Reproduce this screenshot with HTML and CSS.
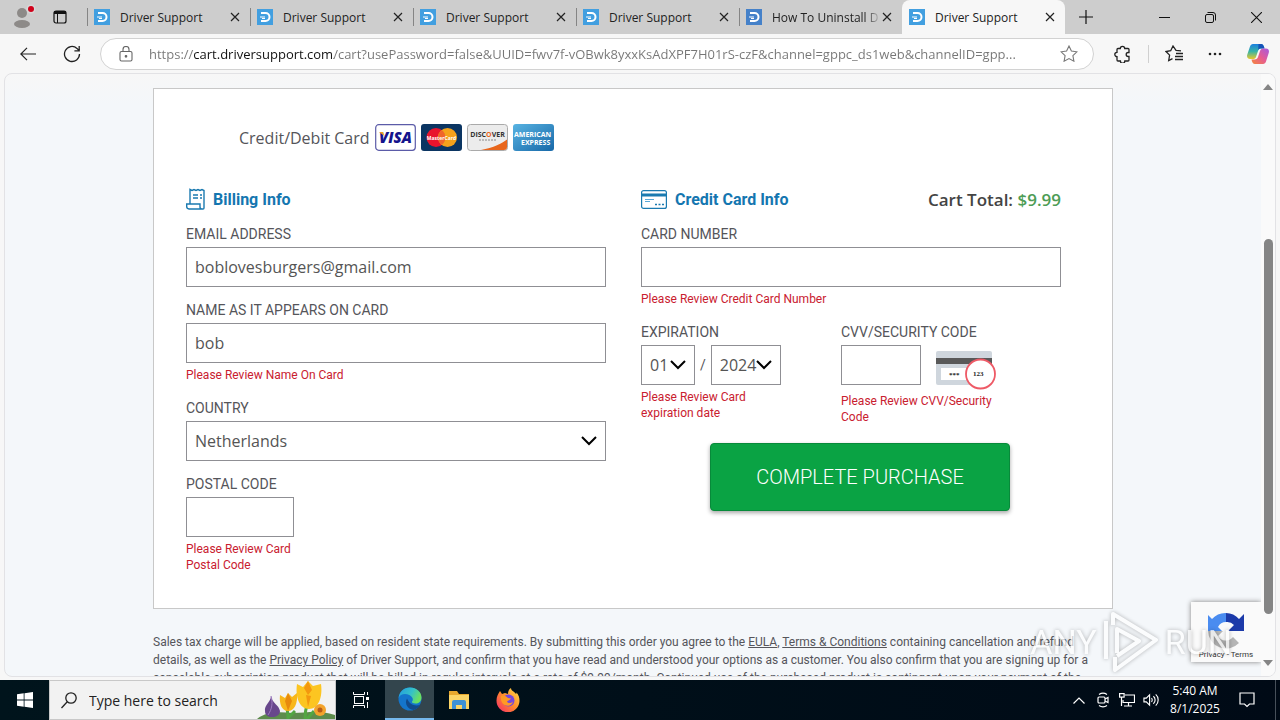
FILE: index.html
```
<!DOCTYPE html>
<html lang="en">
  <head>
    <meta charset="UTF-8" />
    <meta name="viewport" content="width=device-width, initial-scale=1.0" />
    <title>Driver Support</title>
    <link rel="stylesheet" href="styles.css">
  </head>
  <body>
    <!-- shared symbols -->
    <svg class="symbols" aria-hidden="true">
      <symbol id="favicon" viewBox="0 0 16 16">
        <rect width="16" height="16" fill="currentColor" />
        <path d="M4 4h4.500a4 4 0 0 1 0 8H4" fill="none" stroke="#fff" stroke-width="2" />
        <path d="M3 8h5M5 9.500h3" stroke="#fff" stroke-width="1" />
      </symbol>
      <symbol id="close" viewBox="0 0 10 10">
        <path d="M1 1l8 8M9 1L1 9" stroke="#222" stroke-width="1.200" />
      </symbol>
    </svg>

    <header class="tab-bar">
      <div class="tab-tools">
        <button class="icon-button" aria-label="Profile">
          <svg width="28" height="28" viewBox="0 0 28 28">
            <circle cx="12" cy="10" r="5" fill="#8d8a88" />
            <ellipse cx="12" cy="21" rx="8" ry="4" fill="#8d8a88" />
            <circle cx="21" cy="6" r="4.500" fill="#d8d8d8" />
            <circle cx="21" cy="6" r="3" fill="#d0021b" />
          </svg>
        </button>
        <button class="icon-button" aria-label="Tab actions">
          <svg width="14" height="14" viewBox="0 0 14 14" fill="none" stroke="#111">
            <rect x="1" y="1" width="12" height="12" rx="2" stroke-width="1.200" />
            <path d="M1 2.500h12" stroke-width="3" />
            <path d="M4.500 3v10" />
          </svg>
        </button>
      </div>
      <nav class="tabs">
        <div class="tab"><svg class="favicon"><use href="#favicon" /></svg><span class="tab-title">Driver Support</span><button class="tab-close" aria-label="Close tab"><svg width="10" height="10"><use href="#close" /></svg></button></div>
        <div class="tab"><svg class="favicon"><use href="#favicon" /></svg><span class="tab-title">Driver Support</span><button class="tab-close" aria-label="Close tab"><svg width="10" height="10"><use href="#close" /></svg></button></div>
        <div class="tab"><svg class="favicon"><use href="#favicon" /></svg><span class="tab-title">Driver Support</span><button class="tab-close" aria-label="Close tab"><svg width="10" height="10"><use href="#close" /></svg></button></div>
        <div class="tab"><svg class="favicon"><use href="#favicon" /></svg><span class="tab-title">Driver Support</span><button class="tab-close" aria-label="Close tab"><svg width="10" height="10"><use href="#close" /></svg></button></div>
        <div class="tab"><svg class="favicon dark"><use href="#favicon" /></svg><span class="tab-title fade">How To Uninstall D</span><button class="tab-close" aria-label="Close tab"><svg width="10" height="10"><use href="#close" /></svg></button></div>
        <div class="tab active"><svg class="favicon"><use href="#favicon" /></svg><span class="tab-title">Driver Support</span><button class="tab-close" aria-label="Close tab"><svg width="10" height="10"><use href="#close" /></svg></button></div>
      </nav>
      <button class="icon-button new-tab" aria-label="New tab">
        <svg width="14" height="14" viewBox="0 0 14 14"><path d="M7 0v14M0 7h14" stroke="#111" stroke-width="1.200" /></svg>
      </button>
      <div class="window-buttons">
        <button class="icon-button" aria-label="Minimize">
          <svg width="11" height="11" viewBox="0 0 11 11"><path d="M0 5.500h11" stroke="#111" /></svg>
        </button>
        <button class="icon-button" aria-label="Restore">
          <svg width="11" height="11" viewBox="0 0 11 11" fill="none" stroke="#111">
            <rect x=".5" y="2.500" width="8" height="8" rx="1.500" />
            <path d="M2.500 .5H8a2.500 2.500 0 0 1 2.500 2.500v5.500" />
          </svg>
        </button>
        <button class="icon-button" aria-label="Close">
          <svg width="11" height="11" viewBox="0 0 11 11"><path d="M0 0l11 11M11 0L0 11" stroke="#111" stroke-width="1.100" /></svg>
        </button>
      </div>
    </header>

    <div class="toolbar">
      <button class="icon-button back" aria-label="Back">
        <svg width="16" height="14" viewBox="0 0 16 14" fill="none" stroke="#222" stroke-width="1.200"><path d="M16 7H1M7 .8L.8 7 7 13.200" /></svg>
      </button>
      <button class="icon-button reload" aria-label="Refresh">
        <svg width="18" height="18" viewBox="0 0 18 18" fill="none" stroke="#222" stroke-width="1.300"><path d="M16.500 9A7.500 7.500 0 1 1 14 3.400L16 5.500M16.200 1v4.800h-4.800" /></svg>
      </button>
      <div class="address">
        <svg width="14" height="16" viewBox="0 0 14 16" fill="none" stroke="#666" stroke-width="1.100">
          <rect x="1" y="5.500" width="12" height="9.500" rx="1.500" />
          <path d="M4 5.500V3.500a3 3 0 0 1 6 0v2" />
          <circle cx="7" cy="10.300" r=".8" fill="#444" />
        </svg>
        <input class="url" type="text" aria-label="Address" value="https://cart.driversupport.com/cart?usePassword=false&amp;UUID=fwv7f-vOBwk8yxxKsAdXPF7H01rS-czF&amp;channel=gppc_ds1web&amp;channelID=gpp...">
        <button class="icon-button" aria-label="Add to favorites">
          <svg width="18" height="17" viewBox="0 0 18 17" fill="none" stroke="#777" stroke-width="1.100"><path d="M9 1l2.400 5 5.500.8-4 3.900 1 5.500L9 13.600l-4.900 2.600 1-5.500-4-3.900 5.500-.8z" /></svg>
        </button>
      </div>
      <div class="toolbar-actions">
        <button class="icon-button" aria-label="Extensions">
          <svg width="18" height="18" viewBox="0 0 18 18" fill="none" stroke="#222" stroke-width="1.300"><path d="M4 3.500h2.300a2.200 2.200 0 0 1 4.400 0H14a1 1 0 0 1 1 1v3h-.8a2 2 0 0 0 0 4h.8v3.500a1 1 0 0 1-1 1h-3.200a2.200 2.200 0 0 1-4.400 0H4a1 1 0 0 1-1-1v-3.300a2.200 2.200 0 0 1 0-4.400V4.500a1 1 0 0 1 1-1z" /></svg>
        </button>
        <span class="divider"></span>
        <button class="icon-button" aria-label="Favorites">
          <svg width="18" height="17" viewBox="0 0 18 17" fill="none" stroke="#222" stroke-width="1.300"><path d="M16 5.800l-5-.4L8 1 5.700 5.700 1 6.500l3.600 3.600-.9 5.400L7.500 13.600M11 8.500h7M10 11.500h8M10 14.500h8" /></svg>
        </button>
        <button class="icon-button" aria-label="Settings and more">
          <svg width="16" height="4" viewBox="0 0 16 4" fill="#222"><circle cx="3" cy="2" r="1.300" /><circle cx="8" cy="2" r="1.300" /><circle cx="13" cy="2" r="1.300" /></svg>
        </button>
        <button class="icon-button" aria-label="Copilot">
          <svg width="22" height="20" viewBox="0 0 22 20">
            <defs>
              <linearGradient id="cop1" x1="0" y1="0" x2="0" y2="1"><stop offset="0" stop-color="#1a7fe0" /><stop offset=".5" stop-color="#38b4a5" /><stop offset="1" stop-color="#e8c82c" /></linearGradient>
              <linearGradient id="cop2" x1="1" y1="0" x2="0" y2="1"><stop offset="0" stop-color="#a55be0" /><stop offset=".5" stop-color="#e65c93" /><stop offset="1" stop-color="#f5883a" /></linearGradient>
            </defs>
            <path d="M6 0h8c2 0 3 2 3.500 4.500h-4c-1.500 0-2 1-2.500 2.500l-2 6c-.6 1.600-1.500 2-3 2H3c-2.500 0-3.500-2-2.700-4.500L3 2.500C3.500 1 4.500 0 6 0z" fill="url(#cop1)" />
            <path d="M11.500 0H14c2 0 2.700 1.500 3.500 4.500h-4c-1.300 0-1.800.7-2.300 2z" fill="#1553b8" />
            <path d="M16 20H8c-2 0-3-2-3.500-4.500h3c2 0 3-1 3.500-2.500l2-6c.6-1.600 1.500-2.500 3-2.500h3c2.500 0 3.500 2 2.700 4.500L19 17.500c-.5 1.500-1.500 2.500-3 2.500z" fill="url(#cop2)" />
          </svg>
        </button>
      </div>
    </div>

    <div class="viewport">
      <main class="page">
        <form class="checkout">
          <div class="payment">
            <span class="payment-label">Credit/Debit Card</span>
            <svg class="logo" viewBox="0 0 41 27" role="img" aria-label="Visa">
              <rect x=".7" y=".7" width="39.600" height="25.600" rx="3" fill="#fff" stroke="#5b5ba8" stroke-width="1.200" />
              <text x="20.500" y="19" class="visa">VISA</text>
              <path d="M4 8h4l1.500 4z" fill="#f0a020" />
            </svg>
            <svg class="logo" viewBox="0 0 41 27" role="img" aria-label="MasterCard">
              <rect width="41" height="27" rx="3" fill="#0b3562" />
              <circle cx="15" cy="13.500" r="9.500" fill="#e8142d" />
              <circle cx="26.500" cy="13.500" r="9.500" fill="#f5a21b" />
              <path d="M20.700 6a9.500 9.500 0 0 1 0 15 9.500 9.500 0 0 1 0-15z" fill="#f0662a" />
              <text x="20.500" y="16" class="mastercard">MasterCard</text>
            </svg>
            <svg class="logo" viewBox="0 0 41 27" role="img" aria-label="Discover">
              <rect x=".5" y=".5" width="40" height="26" rx="3" fill="#ececec" stroke="#aaa" />
              <path d="M14 26C26 24 36 19 40 15.500V23a3 3 0 0 1-3 3z" fill="#e8661c" />
              <text x="20.500" y="13" class="discover">DISC<tspan fill="#e8661c">O</tspan>VER</text>
              <path d="M12 16h17" stroke="#888" stroke-dasharray="2 1" />
            </svg>
            <svg class="logo" viewBox="0 0 41 27" role="img" aria-label="American Express">
              <defs><linearGradient id="amex" x1="0" y1="0" x2="1" y2="1"><stop offset="0" stop-color="#58b3e2" /><stop offset="1" stop-color="#1768a8" /></linearGradient></defs>
              <rect width="41" height="27" rx="3" fill="url(#amex)" />
              <text x="1" y="12.500" class="amex">AMERICAN</text>
              <text x="8" y="21" class="amex">EXPRESS</text>
            </svg>
          </div>

          <div class="columns">
            <section>
              <div class="section-head">
                <svg width="19" height="22" viewBox="0 0 19 22" fill="none" stroke="#1a7ab0" stroke-width="1.400">
                  <path d="M4 15.500V1.500l2 1 2-1 2 1 2-1 2 1 2-1 2 1V20a1 1 0 0 1-1 1H3a2.500 2.500 0 0 1-2.300-2.500V16H14v3a2 2 0 0 0 2 2" />
                  <path d="M7 7h5M14 7h2M7 10h5M14 10h2" />
                </svg>
                <h2>Billing Info</h2>
              </div>
              <div class="field">
                <label for="email">EMAIL ADDRESS</label>
                <input type="text" id="email" value="boblovesburgers@gmail.com">
              </div>
              <div class="field">
                <label for="name">NAME AS IT APPEARS ON CARD</label>
                <input type="text" id="name" value="bob">
                <p class="error">Please Review Name On Card</p>
              </div>
              <div class="field">
                <label for="country">COUNTRY</label>
                <select id="country"><option>Netherlands</option></select>
              </div>
              <div class="field postal">
                <label for="postal">POSTAL CODE</label>
                <input type="text" id="postal">
                <p class="error">Please Review Card Postal Code</p>
              </div>
            </section>

            <section>
              <div class="section-head">
                <svg width="26" height="19" viewBox="0 0 26 19" fill="none" stroke="#1a7ab0">
                  <rect x=".6" y=".6" width="24.800" height="17.800" rx="2" stroke-width="1.200" />
                  <path d="M1 5h24" stroke-width="3" />
                  <path d="M4 9.500h9M4 11.500h5" stroke="#58a8d8" />
                  <path d="M14 14.500h2M17.500 14.500h2M21 14.500h2" stroke-width="1.500" />
                </svg>
                <h2>Credit Card Info</h2>
                <p class="total">Cart Total: <span>$9.99</span></p>
              </div>
              <div class="field">
                <label for="card">CARD NUMBER</label>
                <input type="text" id="card">
                <p class="error">Please Review Credit Card Number</p>
              </div>
              <div class="card-details">
                <div class="field expiration">
                  <label for="month">EXPIRATION</label>
                  <div class="dates">
                    <select class="month" id="month"><option>01</option></select>
                    <span>/</span>
                    <select class="year" aria-label="Expiration year"><option>2024</option></select>
                  </div>
                  <p class="error">Please Review Card expiration date</p>
                </div>
                <div class="field security">
                  <label for="cvv">CVV/SECURITY CODE</label>
                  <div class="cvv-row">
                    <input type="text" id="cvv">
                    <svg width="60" height="39" viewBox="0 0 60 39">
                      <rect width="56" height="34" rx="2" fill="#cfd6dd" />
                      <rect y="7" width="56" height="6" fill="#595959" />
                      <rect x="5" y="17" width="40" height="12" fill="#fff" />
                      <text x="13" y="26" class="cvv-digits">***</text>
                      <circle cx="44.500" cy="23" r="14.500" fill="#fff" stroke="#ee5a66" stroke-width="1.800" />
                      <text x="37" y="25" class="cvv-digits">123</text>
                    </svg>
                  </div>
                  <p class="error">Please Review CVV/Security Code</p>
                </div>
              </div>
              <button class="purchase" type="submit">COMPLETE PURCHASE</button>
            </section>
          </div>
        </form>

        <p class="terms">Sales tax charge will be applied, based on resident state requirements. By submitting this order you agree to the <a href="#">EULA</a>, <a href="#">Terms &amp; Conditions</a> containing cancellation and refund details, as well as the <a href="#">Privacy Policy</a> of Driver Support, and confirm that you have read and understood your options as a customer. You also confirm that you are signing up for a cancelable subscription product that will be billed in regular intervals at a rate of $9.99/month. Continued use of the purchased product is contingent upon your payment of the</p>
      </main>

      <div class="recaptcha">
        <svg width="38" height="38" viewBox="0 0 38 38">
          <path d="M19 1v9a9 9 0 0 0-8 5l4 4H1V3l4 4A18 18 0 0 1 19 1z" fill="#4a8cf0" />
          <path d="M19 1a18 18 0 0 1 13 6l5-5v17H21l6-6a9 9 0 0 0-8-3z" fill="#1c3aa9" />
          <path d="M1 19a18 18 0 0 0 31 12l-6-6a9 9 0 0 1-15-1l5-5z" fill="#b5b5b5" />
        </svg>
        <div class="recaptcha-links"><a href="#">Privacy</a> - <a href="#">Terms</a></div>
      </div>

      <div class="scrollbar">
        <svg width="10" height="6" viewBox="0 0 10 6"><path d="M5 0l5 6H0z" fill="#858585" /></svg>
        <div class="track"><div class="thumb"></div></div>
        <svg width="10" height="6" viewBox="0 0 10 6"><path d="M0 0h10L5 6z" fill="#858585" /></svg>
      </div>
    </div>

    <div class="watermark">
      <span>ANY</span>
      <svg width="56" height="62" viewBox="0 0 56 62" fill="none" stroke="#fff" stroke-width="4" stroke-linejoin="round">
        <path d="M10 14V3l43 26-41 30V46M14 42V18l22 12-22 15M3 10v38" />
      </svg>
      <span>RUN</span>
    </div>

    <footer class="taskbar">
      <button class="task start" aria-label="Start">
        <svg width="16" height="16" viewBox="0 0 16 16" fill="#fff"><path d="M0 2.300l6.700-1v6.300H0zM7.500 1.200L16 0v7.600H7.500zM0 8.400h6.700v6.300l-6.700-1zM7.500 8.400H16V16l-8.500-1.200z" /></svg>
      </button>
      <div class="search">
        <svg width="16" height="17" viewBox="0 0 16 17" fill="none" stroke="#222" stroke-width="1.300"><circle cx="10" cy="6" r="5.200" /><path d="M6.300 9.800L.5 16" /></svg>
        <input type="text" aria-label="Search" placeholder="Type here to search">
        <svg class="flowers" width="78" height="38" viewBox="0 0 78 38">
          <path d="M0 38C10 30 22 31 36 32c14 0 24-4 42 2v4z" fill="#5d8c4c" />
          <path d="M31 38c0-8-2-12 0-16M48 38c0-10 2-14 3-18M57 30l-7 8M38 30l-6 6" stroke="#52a642" stroke-width="3" fill="none" />
          <path d="M14 15c0 6-7 9-6 15 0 4 3 6 7 6s8-2 8-6c-1-6-8-8-9-15z" fill="#68478c" />
          <path d="M14 15c2 7 1 13-3 19" stroke="#9d7bc1" fill="none" />
          <path d="M23 14l5 3 3-5 4 4 5-4c1 11-3 18-9 18s-9-7-8-16z" fill="#f8b71b" />
          <path d="M31 12l4 8-4 10-3-10z" fill="#e88a0c" />
          <path d="M40 3l6 3 5-6 5 5 8-2c2 14-3 25-12 25S38 17 40 3z" fill="#fcc521" />
          <path d="M51 0l4 9-4 5-4-7zM49 14l2 12 3-11z" fill="#f3980f" />
          <circle cx="63" cy="29" r="6" fill="#f3a32c" /><circle cx="63" cy="29" r="2.500" fill="#b85b16" />
        </svg>
      </div>
      <button class="task" aria-label="Task view">
        <svg width="16" height="16" viewBox="0 0 16 16" fill="none" stroke="#fff"><rect x="1.500" y="4.500" width="9" height="7" /><path d="M.5 0v2.500h11V0M.5 16v-2.500h11V16M14.500 0v3M14.500 10v6" /><rect x="13.500" y="5.500" width="2" height="2" fill="#fff" /></svg>
      </button>
      <button class="task current" aria-label="Microsoft Edge">
        <svg width="24" height="24" viewBox="0 0 24 24">
          <defs><linearGradient id="edge" x1="0" y1="0" x2="1" y2=".4"><stop offset="0" stop-color="#229be0" /><stop offset=".6" stop-color="#35c1c8" /><stop offset="1" stop-color="#6adf62" /></linearGradient></defs>
          <circle cx="12" cy="12" r="11.500" fill="#1475cc" />
          <path d="M.6 11C1.500 4.500 6 .5 12 .5c6.500 0 11.500 4.500 11.500 10 0 4-3 6-6 6-2.500 0-4-1-3.500-2 1-1 1-2 .5-3.500C13 8.500 10 7 7 7 4 7 1.500 8.500.6 11z" fill="url(#edge)" />
          <path d="M9 11.500c-3 5 1 11 6.500 11.500 3-.6 5.500-2.600 7-5.500-5 2.500-11 0-13.500-6z" fill="#114a8b" />
        </svg>
      </button>
      <button class="task" aria-label="File Explorer">
        <svg width="22" height="20" viewBox="0 0 22 20"><path d="M1 1h8l2 3h10v5H1z" fill="#e7a82e" /><path d="M1 5h20v14H1z" fill="#fbd567" /><path d="M4 19v-7a2 2 0 0 1 2-2h10a2 2 0 0 1 2 2v7h-4v-4H8v4z" fill="#3d91d5" /></svg>
      </button>
      <button class="task" aria-label="Firefox">
        <svg width="24" height="24" viewBox="0 0 24 24">
          <defs><linearGradient id="fox" x1="1" y1="0" x2="0" y2="1"><stop offset="0" stop-color="#ffe14a" /><stop offset=".5" stop-color="#ff8a2c" /><stop offset="1" stop-color="#f5236f" /></linearGradient></defs>
          <path d="M4 3l2 3 3-1 3 1c0-3 1-5 3-6 0 3 3 3 5 6 0 0 1-1 0-2 3 3 3.500 6 3.500 9A11.500 11.500 0 0 1 .5 12.500C.5 8.500 2 6 4 3z" fill="url(#fox)" />
          <circle cx="12.500" cy="12.500" r="6" fill="#7547dd" />
          <path d="M5 8c3-1 5 0 7 2l3 .5c-1 2-3 1.500-4 3 1 2 4 2 6 0-1 5-8 6-11 1-1-2-1.500-4-1-6.500z" fill="#ff9a25" />
        </svg>
      </button>
      <div class="tray">
        <button class="tray-button" aria-label="Show hidden icons"><svg width="12" height="7" viewBox="0 0 12 7" fill="none" stroke="#fff" stroke-width="1.200"><path d="M.5 6.500L6 1l5.500 5.500" /></svg></button>
        <button class="tray-button" aria-label="Meet now"><svg width="12" height="16" viewBox="0 0 12 16" fill="none" stroke="#fff" stroke-width="1.200"><rect x="1" y="5" width="7" height="6" rx="1" /><path d="M8 7l3-1.500v5L8 9M2 2.500c3-2 5-2 8 0M2 13.500c3 2 5 2 8 0" /></svg></button>
        <button class="tray-button" aria-label="Network"><svg width="16" height="14" viewBox="0 0 16 14" fill="none" stroke="#fff" stroke-width="1.200"><path d="M6 2h9.500v7.500H4V7M9.500 9.500V13M5 13h8" /><rect x=".6" y=".6" width="4.500" height="3.500" /><path d="M2.500 4v9" /></svg></button>
        <button class="tray-button" aria-label="Volume"><svg width="17" height="14" viewBox="0 0 17 14" fill="none" stroke="#fff" stroke-width="1.200"><path d="M1 5v4h2.500L7 12.500v-11L3.500 5zM9 5c1 1 1 3 0 4M11 3c2.500 2 2.500 6 0 8M13.500 1c3.500 3 3.500 9 0 12" /></svg></button>
        <div class="clock"><time>5:40 AM</time><time>8/1/2025</time></div>
        <button class="tray-button notifications" aria-label="Notifications"><svg width="16" height="16" viewBox="0 0 16 16" fill="none" stroke="#fff" stroke-width="1.200"><path d="M1 1h14v11h-4.500L8 14.500 5.500 12H1z" /></svg></button>
      </div>
      <span class="show-desktop"></span>
    </footer>
  </body>
</html>
```
FILE: styles.css
```
* {
  box-sizing: border-box;
}

body {
  display: flex;
  flex-direction: column;
  height: 100vh;
  margin: 0;
  overflow: hidden;
  background-color: #f7f7f7;
  color: #55555a;
  font-family: "Open Sans", "Noto Sans", sans-serif;
  font-size: 12px;
}

button {
  font-family: inherit;
  cursor: pointer;
}

.symbols {
  position: absolute;
  width: 0;
  height: 0;
}

.icon-button,
.tab-close {
  display: flex;
  align-items: center;
  justify-content: center;
  padding: 0;
  border: none;
  background: none;
}

/* browser tabs */
.tab-bar {
  display: flex;
  flex: none;
  align-items: center;
  height: 34px;
  background-color: #cdcdcd;
}

.tab-tools {
  display: flex;
  flex: none;
  align-items: center;
  gap: 15px;
  width: 87px;
  padding-left: 10px;
}

.tabs {
  display: flex;
  flex: 0 1 978px;
  align-self: stretch;
  min-width: 0;
}

.tab {
  display: flex;
  flex: 1 1 0;
  align-items: center;
  min-width: 0;
  padding: 0 9px 0 7px;
  background: linear-gradient(#858585, #858585) 0 8px / 1px 18px no-repeat;
  color: #222;
}

.tab.active {
  border-radius: 8px 8px 0 0;
  background: #f7f7f7;
}

.favicon {
  flex: none;
  width: 16px;
  height: 16px;
  margin-right: 10px;
  color: #429fe0;
}

.favicon.dark {
  color: #4581c9;
}

.tab-title {
  flex: 1;
  overflow: hidden;
  white-space: nowrap;
}

.tab-title.fade {
  mask-image: linear-gradient(90deg, #000 85%, transparent);
}

.tab-close {
  flex: none;
  width: 12px;
  height: 12px;
}

.new-tab {
  width: 42px;
}

.window-buttons {
  display: flex;
  gap: 35px;
  margin-left: auto;
  padding-right: 18px;
}

/* address bar */
.toolbar {
  display: flex;
  flex: none;
  align-items: center;
  height: 39px;
  padding: 0 11px 0 20px;
}

.reload {
  margin: 0 19px 0 27px;
}

.address {
  display: flex;
  flex: 1;
  align-items: center;
  gap: 16px;
  height: 32px;
  padding: 0 15px 0 18px;
  border: 1px solid #d2d2d2;
  border-radius: 16px;
  background-color: #fff;
}

.url {
  flex: 1;
  min-width: 0;
  padding: 0;
  border: none;
  outline: none;
  /* the host part is darker than the rest */
  background: linear-gradient(90deg, #767676 44px, #111 44px, #111 185px, #767676 185px);
  background-clip: text;
  -webkit-background-clip: text;
  color: transparent;
  font-family: inherit;
  font-size: 13px;
  text-overflow: ellipsis;
}

.toolbar-actions {
  display: flex;
  align-items: center;
  gap: 24px;
  margin-left: 20px;
}

.divider {
  width: 1px;
  height: 18px;
  margin: 0 -8px;
  background-color: #d0d0d0;
}

/* page area */
.viewport {
  position: relative;
  display: flex;
  flex: 1;
  min-height: 0;
  margin: 0 4px 3px;
  overflow: hidden;
  border: 1px solid #e2e2e5;
  border-radius: 8px;
  background: linear-gradient(#f7f7f7, #f4f7fa 30px);
}

.page {
  flex: 1;
  min-width: 0;
  padding: 14px 20px 0;
  overflow: hidden;
  font-family: Roboto, sans-serif;
}

.checkout,
.terms {
  max-width: 960px;
  margin: 0 auto;
}

.checkout {
  padding: 35px 51px 35px 32px;
  border: 1px solid #c8c8c8;
  background-color: #fff;
}

.payment {
  display: flex;
  align-items: center;
  gap: 5px;
  margin-bottom: 35px;
  padding-left: 53px;
}

.payment-label {
  font-family: "Open Sans", sans-serif;
  font-size: 16px;
}

.logo {
  width: 41px;
  height: 27px;
}

.logo text {
  font-family: "Open Sans", sans-serif;
  font-weight: bold;
}

.logo .visa {
  fill: #14148c;
  font-size: 15px;
  font-style: italic;
  font-weight: 800;
  text-anchor: middle;
}

.logo .mastercard {
  fill: #fff;
  font-size: 5px;
  text-anchor: middle;
}

.logo .discover {
  fill: #333;
  font-size: 7px;
  text-anchor: middle;
}

.logo .amex {
  fill: #fff;
  font-size: 7px;
}

.columns {
  display: grid;
  grid-template-columns: 1fr 1fr;
  gap: 35px;
}

.section-head {
  display: flex;
  align-items: center;
  gap: 8px;
  height: 26px;
  margin-bottom: 14px;
}

.section-head h2 {
  margin: 0;
  color: #1476b0;
  font-size: 16px;
  font-weight: bold;
}

.total {
  margin: 0 0 0 auto;
  color: #444;
  font-family: "Open Sans", sans-serif;
  font-size: 17px;
  font-weight: 600;
}

.total span {
  color: #4d9c55;
}

.field {
  margin-bottom: 15px;
}

.field label {
  display: block;
  margin-bottom: 5px;
  font-size: 14px;
  line-height: 16px;
}

.field input,
.field select {
  display: block;
  width: 100%;
  height: 40px;
  padding: 0 8px;
  border: 1px solid #8f8f94;
  border-radius: 0;
  background-color: #fff;
  color: #555;
  font-family: "Open Sans", sans-serif;
  font-size: 16px;
}

.field select {
  appearance: none;
  background-image: url("data:image/svg+xml,%3Csvg xmlns='http://www.w3.org/2000/svg' width='16' height='10'%3E%3Cpath d='M1 1l7 7 7-7' fill='none' stroke='%23000' stroke-width='2'/%3E%3C/svg%3E");
  background-position: right 8px center;
  background-repeat: no-repeat;
}

.error {
  margin: 4px 0 0;
  padding-bottom: 2px;
  color: #c9202f;
  font-size: 12px;
  line-height: 16px;
}

.postal {
  width: 108px;
  margin-bottom: 0;
}

.postal .error {
  padding-bottom: 0;
}

.card-details {
  display: flex;
}

.expiration {
  width: 200px;
}

.expiration .error {
  width: 140px;
}

.dates {
  display: flex;
  align-items: center;
  gap: 5px;
  font-size: 14px;
}

.dates .month {
  width: 54px;
}

.dates .year {
  width: 70px;
}

.security {
  width: 160px;
}

.cvv-row {
  display: flex;
  gap: 15px;
  height: 44px;
}

.cvv-row svg {
  flex: none;
  margin-top: 6px;
}

.cvv-row input {
  width: 80px;
}

.cvv-digits {
  fill: #222;
  font-family: "Liberation Serif", serif;
  font-size: 7px;
  font-weight: bold;
}

.purchase {
  display: block;
  width: 300px;
  height: 68px;
  margin: 16px 0 0 69px;
  border: 1px solid #078a3a;
  border-radius: 4px;
  background-color: #0aa344;
  box-shadow: 0 2px 4px rgba(0, 0, 0, 0.35);
  color: #fff;
  font-family: Roboto, sans-serif;
  font-size: 20px;
  font-weight: 300;
}

.card-details .field {
  margin-bottom: 0;
}

.terms {
  padding-top: 24px;
  font-size: 12px;
  line-height: 18px;
}

.terms a {
  color: inherit;
}

.recaptcha {
  position: absolute;
  right: 14px;
  bottom: 14px;
  display: flex;
  flex-direction: column;
  align-items: center;
  justify-content: flex-end;
  width: 70px;
  height: 60px;
  padding-bottom: 2px;
  background-color: #fafafa;
  box-shadow: 0 0 5px #808080;
  clip-path: inset(-6px 0 -6px -6px);
}

.recaptcha-links {
  color: #333;
  font-family: Roboto, sans-serif;
  font-size: 8px;
  line-height: 10px;
}

.recaptcha-links a {
  color: inherit;
  text-decoration: none;
}

.scrollbar {
  display: flex;
  flex: none;
  flex-direction: column;
  align-items: center;
  width: 14px;
  padding: 10px 0;
  background-color: #fafafa;
}

.track {
  display: flex;
  flex: 1;
  flex-direction: column;
  padding: 149px 0 46px;
}

.thumb {
  flex: 1;
  width: 9px;
  border-radius: 5px;
  background-color: #858585;
}

.watermark {
  position: absolute;
  right: 48px;
  bottom: 47px;
  display: flex;
  align-items: center;
  gap: 6px;
  color: #fff;
  font-family: Roboto, sans-serif;
  font-size: 34px;
  line-height: 62px;
  opacity: 0.7;
  filter: drop-shadow(0 0 2px rgba(0, 0, 0, 0.4));
  pointer-events: none;
}

/* windows taskbar */
.taskbar {
  display: flex;
  flex: none;
  height: 40px;
  background: linear-gradient(90deg, #00141c, #000a16);
}

.task {
  display: flex;
  align-items: center;
  justify-content: center;
  width: 49px;
  padding: 0;
  border: none;
  background: none;
}

.task.current {
  border-bottom: 2px solid #76b9ed;
  background-color: #33454d;
}

.search {
  display: flex;
  flex: 0 1 287px;
  align-items: center;
  gap: 12px;
  padding-left: 11px;
  overflow: hidden;
  border: 1px solid #c8c8c8;
  background-color: #f2f2f2;
}

.search input {
  flex: 1;
  min-width: 0;
  padding: 0;
  border: none;
  outline: none;
  background: none;
  font-family: inherit;
  font-size: 14px;
}

.search input::placeholder {
  color: #222;
}

.search svg {
  flex: none;
}

.tray {
  display: flex;
  align-items: center;
  gap: 8px;
  margin-left: auto;
  padding-right: 20px;
}

.tray-button {
  display: flex;
  align-items: center;
  justify-content: center;
  width: 16px;
  padding: 0;
  border: none;
  background: none;
}

.clock {
  display: flex;
  flex-direction: column;
  width: 56px;
  color: #fff;
  line-height: 18px;
  text-align: center;
}

.notifications {
  margin-left: 8px;
}

.show-desktop {
  width: 5px;
  border-left: 1px solid #47505a;
}
```
